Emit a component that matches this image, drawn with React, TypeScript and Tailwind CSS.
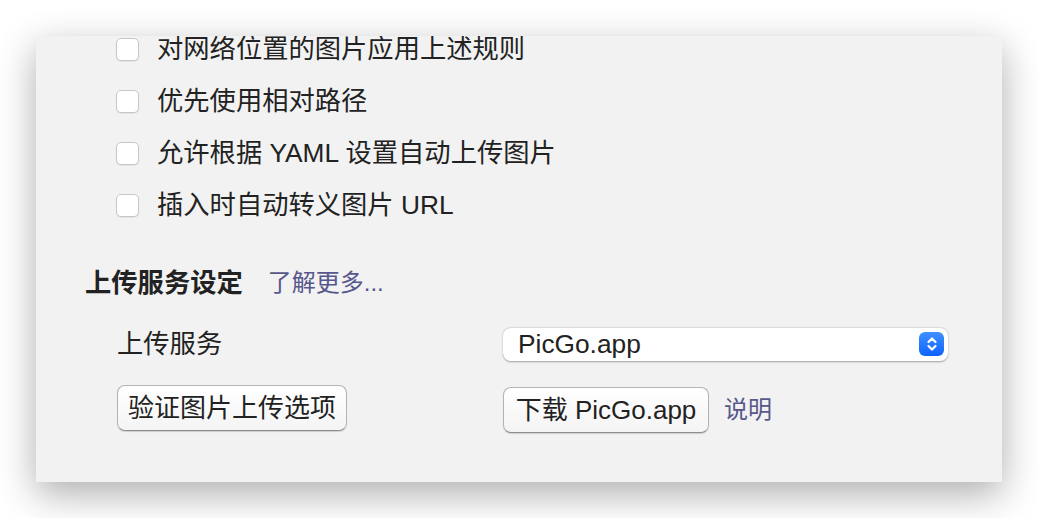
import React from 'react';

const font = { fontFamily: '"Liberation Sans", "Noto Sans CJK SC", sans-serif' };

const options = [
  '对网络位置的图片应用上述规则',
  '优先使用相对路径',
  '允许根据 YAML 设置自动上传图片',
  '插入时自动转义图片 URL',
];

const Checkbox: React.FC = () => (
  <span className="w-[23px] h-[23px] rounded-[5px] border border-[#c6c6c6] bg-white shadow-[0_1px_1px_rgba(0,0,0,0.06)] shrink-0" />
);

const MacButton: React.FC<{ label: string; className?: string }> = ({ label, className }) => (
  <button
    className={`h-[46px] rounded-[8px] border border-[#b4b4b4] border-b-[#8e8e8e] bg-gradient-to-b from-white to-[#f4f4f4] shadow-[0_1px_1px_rgba(0,0,0,0.15)] text-[26px] text-[#222] flex items-center justify-center ${className ?? ''}`}
  >
    {label}
  </button>
);

const Stepper: React.FC = () => (
  <span className="w-[25px] h-[24px] rounded-[6px] bg-gradient-to-b from-[#3f8fff] to-[#0b62fe] flex items-center justify-center">
    <svg width="12" height="16" viewBox="0 0 12 16" fill="none" stroke="white" strokeWidth="2.2" strokeLinecap="round" strokeLinejoin="round">
      <path d="M2.5 6 L6 2.5 L9.5 6" />
      <path d="M2.5 10 L6 13.5 L9.5 10" />
    </svg>
  </span>
);

export default function App() {
  return (
    <div className="w-[1038px] h-[518px] bg-white pt-[36px] pl-[36px] overflow-hidden" style={font}>
      <div className="w-[966px] h-[446px] bg-[#f2f2f2] overflow-hidden shadow-[0_12px_36px_rgba(0,0,0,0.32)] text-[#222] text-[26.3px] leading-none">
        <div className="mt-[-13px] pl-[80px] flex flex-col">
          {options.map((o) => (
            <div key={o} className="h-[52px] flex items-center gap-[18px]">
              <Checkbox />
              <span>{o}</span>
            </div>
          ))}
        </div>

        <div className="mt-[26px] h-[52px] pl-[49px] flex items-center gap-[25px]">
          <span className="font-bold">上传服务设定</span>
          <span className="text-[#57578c] text-[24px]">了解更多...</span>
        </div>

        <div className="mt-[18px] pl-[81px] grid grid-cols-[386px_445px] items-center">
          <span className="h-[34px] flex items-center">上传服务</span>
          <div className="h-[33px] rounded-[8px] bg-white shadow-[0_0.5px_2px_rgba(0,0,0,0.35)] flex items-center justify-between pl-[15px] pr-[4px]">
            <span>PicGo.app</span>
            <Stepper />
          </div>
        </div>

        <div className="pl-[81px] mt-[24px] grid grid-cols-[386px_auto] items-start">
          <MacButton label="验证图片上传选项" className="w-[230px]" />
          <div className="flex items-center gap-[15px] mt-[2px]">
            <MacButton label="下载 PicGo.app" className="w-[206px]" />
            <span className="text-[#57578c] text-[24px]">说明</span>
          </div>
        </div>
      </div>
    </div>
  );
}
